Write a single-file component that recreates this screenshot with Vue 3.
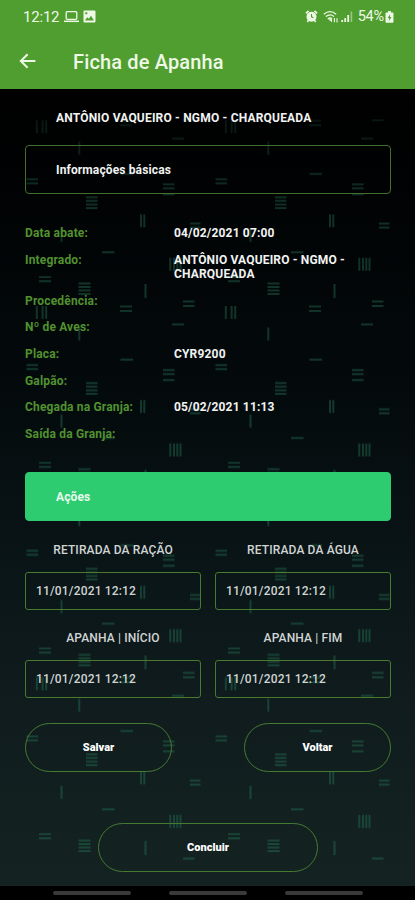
<script setup>
import { ref } from "vue";

const integrado = "ANTÔNIO VAQUEIRO - NGMO - CHARQUEADA";

const dados = [
  { label: "Data abate:", valor: "04/02/2021 07:00" },
  { label: "Integrado:", valor: integrado },
  { label: "Procedência:", valor: "" },
  { label: "Nº de Aves:", valor: "" },
  { label: "Placa:", valor: "CYR9200" },
  { label: "Galpão:", valor: "" },
  { label: "Chegada na Granja:", valor: "05/02/2021 11:13" },
  { label: "Saída da Granja:", valor: "" },
];

const acoes = ref([
  { label: "RETIRADA DA RAÇÃO", valor: "11/01/2021 12:12" },
  { label: "RETIRADA DA ÁGUA", valor: "11/01/2021 12:12" },
  { label: "APANHA | INÍCIO", valor: "11/01/2021 12:12" },
  { label: "APANHA | FIM", valor: "11/01/2021 12:12" },
]);
</script>

<template>
  <div class="tela">
    <header class="topo">
      <div class="status">
        <span class="hora">12:12</span>
        <svg class="laptop" width="15" height="13" viewBox="0 0 15 13">
          <rect x="2.2" y="1.7" width="10.6" height="7.6" rx="1" fill="none" stroke="currentColor" stroke-width="1.3" />
          <path d="M0 11.3h15" stroke="currentColor" stroke-width="1.5" />
        </svg>
        <svg class="foto" width="13" height="13" viewBox="0 0 13 13">
          <path
            fill="currentColor"
            fill-rule="evenodd"
            d="M1.5 0.5h10q1 0 1 1v10q0 1-1 1h-10q-1 0-1-1v-10q0-1 1-1zM2 10.5h9L8 5.8 5.8 8.8 4.2 7.2zM2.3 2.3v2h2v-2z"
          />
        </svg>
        <span class="espaco"></span>
        <svg width="13" height="13" viewBox="0 0 14 14">
          <path d="M1 3.6 3.8 1M13 3.6 10.2 1M2.5 12.8l1.6-2M11.5 12.8l-1.6-2" stroke="currentColor" stroke-width="1.8" />
          <circle cx="7" cy="7.2" r="5.4" fill="currentColor" />
          <path d="M7 4.4v3l2 1" fill="none" stroke="#509e2f" stroke-width="1.2" />
        </svg>
        <svg class="wifi" width="16" height="14" viewBox="0 0 16 14">
          <path
            d="M.8 4.2Q7 -.8 13.2 4.2M2.8 6.6Q7 3.4 11 6.4M4.8 8.9Q7 7.2 9 8.7"
            fill="none"
            stroke="currentColor"
            stroke-width="1.3"
          />
          <path d="M5.4 9.4 9 9v3.2z" fill="currentColor" />
          <path d="M11.4 8v4.2M14 12.4V8.2" fill="none" stroke="currentColor" stroke-width="1.1" />
        </svg>
        <svg class="sinal" width="12" height="13" viewBox="0 0 12 13">
          <path d="M1.2 12v-2M4.2 12V8M7.2 12V5" stroke="currentColor" stroke-width="1.8" />
          <path d="M10.4 12V1.5" stroke="currentColor" stroke-width="1.6" opacity="0.45" />
        </svg>
        <span class="bateria">54%</span>
        <svg width="9" height="12" viewBox="0 0 9 13">
          <path d="M3 0h3v1.6H8q.8 0 .8.8v9.4q0 .8-.8.8H1q-.8 0-.8-.8V2.4q0-.8.8-.8h2z" fill="currentColor" />
          <path d="M5.2 3.6 2.4 7.6h1.8L3.8 10.8 6.7 6.6H4.9z" fill="#509e2f" />
        </svg>
      </div>
      <div class="barra">
        <svg width="18" height="16" viewBox="0 0 18 16">
          <path d="M16.4 8H2M8.6 1.2 1.8 8l6.8 6.8" fill="none" stroke="currentColor" stroke-width="2" />
        </svg>
        <h1>Ficha de Apanha</h1>
      </div>
    </header>

    <main class="conteudo">
      <svg class="fundo" width="415" height="797" viewBox="0 89 415 797">
        <defs>
          <pattern id="tracos" x="0" y="278" width="189" height="185.7" patternUnits="userSpaceOnUse">
            <!-- traços horizontais -->
            <path
              d="M78.5 5.5h12M78.5 9h12M78.5 12.5h12M78.5 16h12M120 28.5h12M120 33h12M183 23.5h6M0 23.5h5.5M183 28h6M0 28h5.5M172 46.5h12M120.5 81.5h12.5M26.5 87h11.5M26.5 91h11.5M163 92h11.5M163 96.2h11.5M163 102h11.5M86 105h11.5M86 108.6h11.5M86 112.2h11.5M86 115.8h11.5M0 131.3h11.5M0 135.3h11.5M102 160h12.5"
            />
            <path d="M39 185h12M39 3.3h12" />
            <!-- traços verticais -->
            <path
              d="M145.5 6v14M36.8 28v13M42.6 28v13M46.2 28v13M79.3 49.5v13M141 122v13M144.3 122v13M61.5 136.5v13M170.3 165.5v13M174 165.5v13M177.3 165.5v13M180.5 165.5v13"
            />
          </pattern>
          <linearGradient id="luz" x1="0" y1="0" x2="0" y2="1">
            <stop offset="0" stop-color="#fff" stop-opacity="0" />
            <stop offset="0.03" stop-color="#fff" stop-opacity="0.3" />
            <stop offset="0.14" stop-color="#fff" stop-opacity="0.7" />
            <stop offset="1" stop-color="#fff" />
          </linearGradient>
          <mask id="sombra">
            <rect y="89" width="415" height="797" fill="url(#luz)" />
          </mask>
        </defs>
        <g mask="url(#sombra)">
          <rect x="25" y="118" width="365" height="744" fill="url(#tracos)" />
        </g>
      </svg>

      <h2>{{ integrado }}</h2>
      <section class="secao">Informações básicas</section>

      <dl>
        <div v-for="item in dados" :key="item.label" class="linha">
          <dt>{{ item.label }}</dt>
          <dd>{{ item.valor }}</dd>
        </div>
      </dl>

      <section class="secao ativa">Ações</section>

      <div class="campos">
        <div v-for="acao in acoes" :key="acao.label" class="campo">
          <div class="rotulo">{{ acao.label }}</div>
          <div class="data">{{ acao.valor }}</div>
        </div>
      </div>

      <div class="botoes">
        <button>Salvar</button>
        <button>Voltar</button>
      </div>
      <button class="concluir">Concluir</button>
    </main>

    <footer class="navegacao">
      <span></span>
      <span></span>
      <span></span>
    </footer>
  </div>
</template>

<style>
body {
  margin: 0;
  background: #000;
}
</style>

<style scoped>
* {
  box-sizing: border-box;
}

.tela {
  width: 415px;
  height: 900px;
  display: flex;
  flex-direction: column;
  overflow: hidden;
  font-family: Roboto, "Liberation Sans", sans-serif;
  color: #f1f3f2;
}

.topo {
  height: 89px;
  background: #509e2f;
  color: #eef8e6;
}

.status {
  height: 33px;
  padding: 0 21px 0 23px;
  display: flex;
  align-items: center;
  font-size: 15px;
}

.hora {
  width: 41px;
  letter-spacing: -0.2px;
}

.foto {
  margin-left: 4px;
}

.espaco {
  flex: 1;
}

.wifi {
  margin-left: 5px;
}

.sinal {
  margin-left: 2px;
}

.bateria {
  margin: 0 1px 0 5px;
  font-size: 14.5px;
  letter-spacing: -0.2px;
}

.barra {
  height: 56px;
  padding: 0 19px;
  display: flex;
  align-items: center;
}

.barra h1 {
  margin: 1px 0 0 36px;
  font-size: 20px;
  font-weight: 500;
  letter-spacing: 0.15px;
}

.conteudo {
  position: relative;
  z-index: 0;
  height: 797px;
  padding: 22px 24px 0 25px;
  background: linear-gradient(#000 0%, #010304 15%, #040b0d 40%, #0a1517 60%, #101c1d 78%, #142322 100%);
}

.fundo {
  position: absolute;
  top: 0;
  left: 0;
  z-index: -1;
}

.fundo pattern path {
  fill: none;
  stroke: #1b4f3c;
  stroke-width: 2;
  opacity: 0.85;
}

h2 {
  margin: 0 0 19px;
  padding-left: 31px;
  font-size: 12px;
  line-height: 15px;
  font-weight: 700;
  letter-spacing: 0.19px;
  white-space: nowrap;
}

.secao {
  height: 49px;
  padding-left: 30px;
  display: flex;
  align-items: center;
  border: 1px solid #41702e;
  border-radius: 4px;
  font-size: 12px;
  font-weight: 700;
  letter-spacing: 0.13px;
}

.secao.ativa {
  background: #2ecc71;
  border-color: #2ecc71;
  color: #e8fbef;
}

dl {
  height: 278px;
  margin: 0;
  padding-top: 32px;
  display: flex;
  flex-direction: column;
  gap: 12px;
}

.linha {
  display: grid;
  grid-template-columns: 149px 185px;
  font-size: 12px;
  line-height: 14.6px;
  font-weight: 700;
  letter-spacing: 0.17px;
}

dt {
  color: #51922f;
}

dd {
  margin: 0;
}

.campos {
  padding-top: 21px;
  display: grid;
  grid-template-columns: 176px 176px;
  justify-content: space-between;
  row-gap: 20px;
}

.rotulo {
  height: 16px;
  line-height: 16px;
  margin-bottom: 14px;
  text-align: center;
  font-size: 12px;
  font-weight: 500;
  letter-spacing: 0.13px;
  color: #d0d5d4;
}

.data {
  height: 38px;
  padding-left: 10px;
  display: flex;
  align-items: center;
  border: 1px solid #4a7a2c;
  border-radius: 3px;
  font-size: 12px;
  font-weight: 500;
  letter-spacing: 0.17px;
  color: #d0d5d4;
}

.botoes {
  margin: 25px 0 51px;
  display: flex;
  justify-content: space-between;
}

button {
  display: block;
  width: 147px;
  height: 49px;
  padding: 0;
  border: 1px solid #467a33;
  border-radius: 25px;
  background: transparent;
  color: #fff;
  font-family: inherit;
  font-size: 11px;
  font-weight: 900;
}

.concluir {
  width: 220px;
  margin: 0 auto;
}

.navegacao {
  height: 14px;
  padding: 5px 52px 0 53px;
  display: flex;
  justify-content: space-between;
  background: #000;
}

.navegacao span {
  width: 78px;
  height: 4px;
  border-radius: 2px;
  background: #3a3a3a;
}
</style>
